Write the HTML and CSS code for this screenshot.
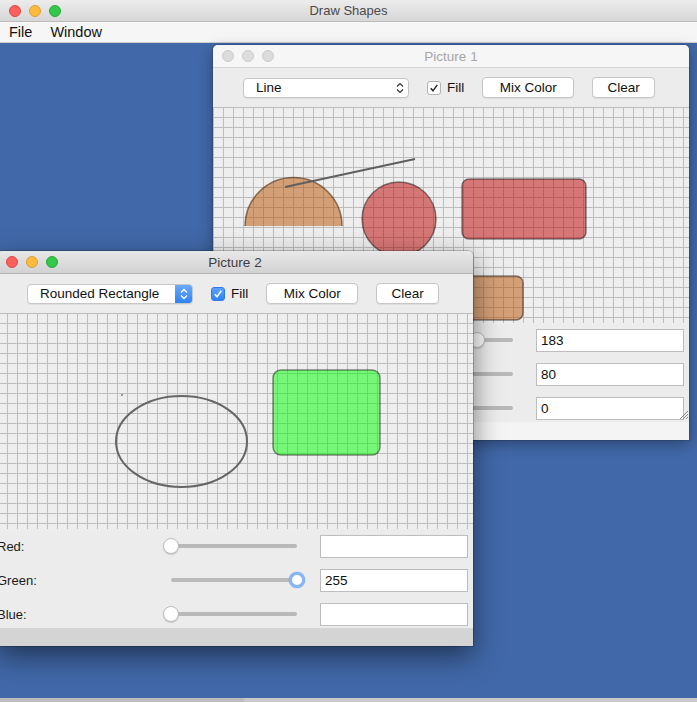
FILE: index.html
```html
<!DOCTYPE html>
<html>
<head>
<meta charset="utf-8">
<link rel="stylesheet" href="styles.css">
</head>
<body>
<div class="screen">
  <div class="app-title">
    <div class="lights"><span class="light red"></span><span class="light yellow"></span><span class="light green"></span></div>
    <div class="app-name">Draw Shapes</div>
    <div></div>
  </div>
  <div class="menubar"><span class="menu">File</span><span class="menu">Window</span></div>

  <div class="desktop">
    <!-- Picture 1 (inactive) -->
    <div class="win win1 inactive">
      <div class="titlebar">
        <div class="lights"><span class="light"></span><span class="light"></span><span class="light"></span></div>
        <div class="win-title">Picture 1</div>
        <div></div>
      </div>
      <div class="toolbar">
        <div class="combo"><span class="combo-text">Line</span><span class="stepper"><svg width="8" height="12" viewBox="0 0 8 12"><path d="M1 4.5 L4 1.5 L7 4.5 M1 7.5 L4 10.5 L7 7.5" fill="none" stroke="#333" stroke-width="1.2"/></svg></span></div>
        <span class="check"><svg width="10" height="10" viewBox="0 0 10 10"><path d="M1.8 5.2 L4 7.8 L8.3 1.8" fill="none" stroke="#222" stroke-width="1.4"/></svg></span>
        <span class="check-label">Fill</span>
        <span class="btn btn-mix">Mix Color</span>
        <span class="btn btn-clear">Clear</span>
      </div>
      <svg class="canvas" width="476" height="216" viewBox="0 0 476 216">
        <path d="M32 119 A48.5 48.5 0 0 1 129 119 Z" fill="rgba(183,80,0,0.5)"/>
        <path d="M32 119 A48.5 48.5 0 0 1 129 119" fill="none" stroke="rgba(70,40,10,0.6)" stroke-width="1.5"/>
        <line x1="72" y1="80" x2="202" y2="52" stroke="#5f5f5f" stroke-width="2"/>
        <circle cx="186" cy="112" r="37" fill="rgba(190,0,0,0.5)" stroke="rgba(0,0,0,0.45)" stroke-width="1.5"/>
        <rect x="249" y="72" width="124" height="60" rx="7" fill="rgba(190,0,0,0.5)" stroke="rgba(0,0,0,0.45)" stroke-width="1.5"/>
        <rect x="220" y="169" width="90" height="44" rx="7" fill="rgba(183,80,0,0.5)" stroke="rgba(0,0,0,0.45)" stroke-width="1.5"/>
      </svg>
      <div class="panel">
        <div class="row">
          <span class="label">Red:</span>
          <div class="slider"><div class="track"></div><div class="thumb" style="left:90px"></div></div>
          <div class="field">183</div>
        </div>
        <div class="row">
          <span class="label">Green:</span>
          <div class="slider"><div class="track"></div><div class="thumb" style="left:40px"></div></div>
          <div class="field">80</div>
        </div>
        <div class="row">
          <span class="label">Blue:</span>
          <div class="slider"><div class="track"></div><div class="thumb" style="left:0px"></div></div>
          <div class="field">0</div>
        </div>
        <svg class="grip" width="11" height="11" viewBox="0 0 11 11"><path d="M10 2 L2 10 M10 5 L5 10 M10 8 L8 10" stroke="#8a8a8a" stroke-width="1"/></svg>
      </div>
      <div class="strip"></div>
    </div>

    <!-- Picture 2 (active) -->
    <div class="win win2 active">
      <div class="titlebar">
        <div class="lights"><span class="light red"></span><span class="light yellow"></span><span class="light green"></span></div>
        <div class="win-title">Picture 2</div>
        <div></div>
      </div>
      <div class="toolbar">
        <div class="combo"><span class="combo-text">Rounded Rectangle</span><span class="stepper"><svg width="8" height="12" viewBox="0 0 8 12"><path d="M1 4.5 L4 1.5 L7 4.5 M1 7.5 L4 10.5 L7 7.5" fill="none" stroke="#fff" stroke-width="1.3"/></svg></span></div>
        <span class="check"><svg width="10" height="10" viewBox="0 0 10 10"><path d="M1.8 5.2 L4 7.8 L8.3 1.8" fill="none" stroke="#fff" stroke-width="1.6"/></svg></span>
        <span class="check-label">Fill</span>
        <span class="btn btn-mix">Mix Color</span>
        <span class="btn btn-clear">Clear</span>
      </div>
      <svg class="canvas" width="476" height="216" viewBox="0 0 476 216">
        <ellipse cx="184.5" cy="128.5" rx="65.5" ry="45.5" fill="none" stroke="#666" stroke-width="2"/>
        <circle cx="125" cy="82" r="1" fill="#777"/>
        <rect x="276" y="57" width="107" height="85" rx="8" fill="rgba(0,255,0,0.5)" stroke="rgba(0,0,0,0.45)" stroke-width="1.5"/>
      </svg>
      <div class="panel">
        <div class="row">
          <span class="label">Red:</span>
          <div class="slider"><div class="track"></div><div class="thumb" style="left:0px"></div></div>
          <div class="field"></div>
        </div>
        <div class="row">
          <span class="label">Green:</span>
          <div class="slider"><div class="track"></div><div class="thumb focus" style="left:126px"></div></div>
          <div class="field">255</div>
        </div>
        <div class="row">
          <span class="label">Blue:</span>
          <div class="slider"><div class="track"></div><div class="thumb" style="left:0px"></div></div>
          <div class="field"></div>
        </div>
      </div>
      <div class="strip"></div>
    </div>
  </div>
  <div class="dock"></div>
</div>
</body>
</html>
```
FILE: styles.css
```css
* { box-sizing: border-box; }
html, body { margin: 0; padding: 0; }
body {
  font-family: "Liberation Sans", Arial, sans-serif;
  background: #4168a8;
  color: #111;
}
.screen {
  width: 697px;
  height: 702px;
  overflow: hidden;
  position: relative;
  background: #4168a8;
}

/* main app title */
.app-title {
  height: 22px;
  display: grid;
  grid-template-columns: 1fr auto 1fr;
  align-items: center;
  background: linear-gradient(#ececec, #d7d7d7);
  border-bottom: 1px solid #bcbcbc;
}
.app-name {
  font-size: 13px;
  color: #4a4a4a;
}
.lights {
  display: flex;
  gap: 8px;
  padding-left: 9px;
}
.light {
  width: 12px;
  height: 12px;
  border-radius: 50%;
  background: #dcdcdc;
  border: 1px solid #cbcbcb;
}
.light.red { background: #fc605c; border-color: #df4744; }
.light.yellow { background: #fdbc40; border-color: #de9f34; }
.light.green { background: #34c84a; border-color: #27aa35; }

.menubar {
  height: 21px;
  background: #f6f6f6;
  border-bottom: 1px solid #cfcfcf;
  display: flex;
  align-items: center;
  gap: 18px;
  padding-left: 9px;
  font-size: 14.5px;
  color: #111;
}

.desktop {
  position: relative;
  height: 655px;
  background: #4168a8;
}
.dock {
  height: 4px;
  background: linear-gradient(90deg, #bdbdbd 0 35%, #c9c9c9 35%);
}

/* windows */
.win {
  position: absolute;
  width: 476px;
  background: #ececec;
  border-radius: 5px 5px 0 0;
}
.win1 {
  left: 213px;
  top: 2px;
  box-shadow: 0 4px 14px rgba(0,0,0,0.35), 0 0 0 1px rgba(0,0,0,0.12);
}
.win2 {
  left: -3px;
  top: 208px;
  box-shadow: 0 10px 28px rgba(0,0,0,0.5), 0 0 0 1px rgba(0,0,0,0.2);
}
.titlebar {
  height: 23px;
  display: grid;
  grid-template-columns: 1fr auto 1fr;
  align-items: center;
  border-bottom: 1px solid #c4c4c4;
  border-radius: 5px 5px 0 0;
  font-size: 13.5px;
}
.inactive .titlebar { background: #f6f6f6; color: #a6a6a6; border-bottom-color: #d6d6d6; }
.active .titlebar { background: linear-gradient(#e8e8e8, #d2d2d2); color: #3c3c3c; border-bottom-color: #b4b4b4; }

.toolbar {
  height: 39px;
  display: flex;
  align-items: center;
  padding-left: 30px;
  font-size: 13.5px;
}
.combo {
  width: 166px;
  height: 20px;
  background: #fff;
  border: 1px solid #c6c6c6;
  border-radius: 4px;
  display: flex;
  align-items: center;
  justify-content: space-between;
  margin-right: 18px;
  overflow: hidden;
  box-shadow: 0 1px 0 rgba(0,0,0,0.05);
}
.combo-text { padding-left: 12px; }
.stepper {
  width: 17px;
  height: 100%;
  display: flex;
  align-items: center;
  justify-content: center;
}
.active .stepper { background: linear-gradient(#6aaaf9, #2f82f3); }
.check {
  width: 14px;
  height: 14px;
  border-radius: 3px;
  display: flex;
  align-items: center;
  justify-content: center;
  margin-right: 6px;
}
.inactive .check { background: #fff; border: 1px solid #b2b2b2; }
.active .check { background: linear-gradient(#5ea3f8, #2f83f3); border: 1px solid #2f7ce6; }
.check-label { font-size: 13.5px; }
.btn {
  height: 21px;
  background: #fff;
  border: 1px solid #c6c6c6;
  border-radius: 4px;
  display: flex;
  align-items: center;
  justify-content: center;
  margin-left: 18px;
  box-shadow: 0 1px 0 rgba(0,0,0,0.06);
}
.btn-mix { width: 92px; }
.btn-clear { width: 63px; }

.canvas {
  display: block;
  background-color: #eeeeee;
  background-image:
    linear-gradient(to right, #bdbdbd 1px, transparent 1px),
    linear-gradient(to bottom, #bdbdbd 1px, transparent 1px);
  background-size: 10px 10px;
}

.panel {
  height: 99px;
  position: relative;
}
.row {
  height: 34px;
  display: grid;
  grid-template-columns: 166px 157px 148px;
  align-items: center;
  font-size: 13px;
}
.label { padding-left: 0; color: #1a1a1a; }
.slider {
  position: relative;
  width: 142px;
  height: 18px;
  display: flex;
  align-items: center;
}
.track {
  margin: 0 8px;
  flex: 1;
  height: 4px;
  border-radius: 2px;
  background: #b9b9b9;
}
.thumb {
  position: absolute;
  top: 1px;
  width: 16px;
  height: 16px;
  border-radius: 50%;
  background: #fff;
  border: 1px solid #bdbdbd;
  box-shadow: 0 1px 1px rgba(0,0,0,0.15);
}
.thumb.focus {
  border: 3px solid #86b6f3;
  box-shadow: 0 0 1px #5e9ae8;
}
.field {
  width: 148px;
  height: 23px;
  background: #fff;
  border: 1px solid #bdbdbd;
  font-size: 13.5px;
  padding-left: 4px;
  line-height: 21px;
}
.grip {
  position: absolute;
  right: 0;
  bottom: 2px;
}
.strip { height: 18px; }
.inactive .strip { background: #f4f4f4; }
.active .strip { background: #d4d4d4; }
```
